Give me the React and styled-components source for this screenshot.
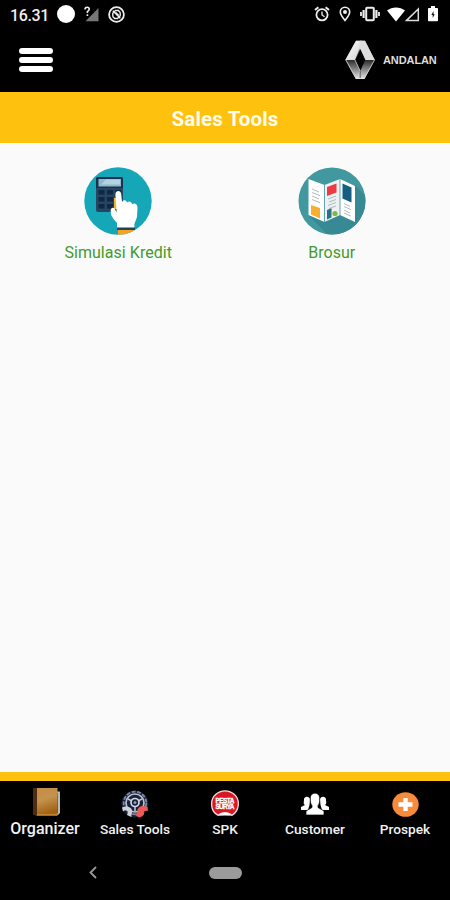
import React from "react"
import styled, { createGlobalStyle } from "styled-components"

const AlarmIcon = () => (
	<svg width="16" height="16" viewBox="0 0 16 16" fill="none" stroke="#eee">
		<circle cx="8" cy="8.8" r="5.6" strokeWidth="1.8" />
		<path d="M1 4 4.4 1.2M15 4 11.6 1.2" strokeWidth="2" />
		<path d="M8 5.5V9l2.6 1.7" strokeWidth="1.3" />
	</svg>
)

const PinIcon = () => (
	<svg width="12" height="16" viewBox="0 0 12 16" fill="none" stroke="#eee">
		<path d="M6 14.4C3.4 11.2 1.3 8.6 1.3 6a4.7 4.7 0 0 1 9.4 0c0 2.6-2.1 5.2-4.7 8.4z" strokeWidth="1.6" />
		<circle cx="6" cy="6" r="2" fill="#eee" stroke="none" />
	</svg>
)

const VibrateIcon = () => (
	<svg width="20" height="16" viewBox="0 0 20 16" fill="none" stroke="#eee">
		<rect x="6.2" y="1.8" width="7.6" height="12.4" rx="1" strokeWidth="2" />
		<path d="M3.6 4v8M16.4 4v8" strokeWidth="2.2" />
		<path d="M1 6v4M19 6v4" strokeWidth="1.8" />
	</svg>
)

const WifiIcon = () => (
	<svg width="18" height="15" viewBox="0 0 18 15">
		<path d="M0 3.4C5.2-.6 12.8-.6 18 3.4L9 14.5z" fill="#fff" />
	</svg>
)

const SignalIcon = () => (
	<svg width="15" height="15" viewBox="0 0 15 15">
		<path d="M1.6 13.4 13.3 2v11.4z" fill="none" stroke="#ddd" strokeWidth="1.5" />
	</svg>
)

const BatteryIcon = () => (
	<svg width="10" height="16" viewBox="0 0 10 16">
		<path d="M3 0h4v2h2.2q.8 0 .8.8v11.7q0 .8-.8.8H.8q-.8 0-.8-.8V2.8Q0 2 .8 2H3z" fill="#fff" />
		<path d="M5.5 5 3.4 9h1.3v3L6.700 8.200H5.500z" fill="#111" />
	</svg>
)

const NoSimIcon = () => (
	<svg width="15" height="16" viewBox="0 0 15 16">
		<path d="M1.5 15.2 14.5 2v13.2z" fill="#777" />
		<path d="M1 3.6Q1 1.3 3.100 1.300T5.200 3.300Q5.200 4.500 3.400 5.700V7M3.400 8.300V10" fill="none" stroke="#eee" strokeWidth="1.6" />
	</svg>
)

const SyncIcon = () => (
	<svg width="17" height="17" viewBox="0 0 17 17" fill="none" stroke="#eee">
		<circle cx="8.5" cy="8.5" r="7.4" strokeWidth="1.8" />
		<path d="M4.8 10.5V7.2L7.500 4.500M12.200 6.500v3.300L9.500 12.500M7 4.500h3.300l2 2M10 12.500H6.700l-2-2" strokeWidth="1.4" />
		<path d="m4.800 4.800 7.500 7.500M7.700 6.500l3 3" strokeWidth="1.5" />
	</svg>
)

const DiamondLogo = () => (
	<svg width="30" height="40" viewBox="0 0 30 40">
		<defs>
			<linearGradient id="steelTop" x1="0" y1="0" x2="1" y2="1">
				<stop offset="0" stopColor="#fff" />
				<stop offset="1" stopColor="#d2d2d2" />
			</linearGradient>
			<linearGradient id="steelBottom" x1="0" y1="0" x2="0" y2="1">
				<stop offset="0" stopColor="#292929" />
				<stop offset="1" stopColor="#e8e8e8" />
			</linearGradient>
		</defs>
		<path d="M11 .8h9l9.800 19.100L19.300 39H11L.3 19.900z" fill="#999" />
		<path d="M11 .8h6L10 19.900H.3z" fill="url(#steelTop)" />
		<path d="M15 .8h5l9.800 19.100H20.200L14 8z" fill="#dedede" />
		<path d="M.3 19.900H10L17 36l-1.500 3H11z" fill="url(#steelBottom)" />
		<path d="M29.800 19.900H20.200L13.500 36l2 3h3.800z" fill="url(#steelBottom)" />
		<path d="m15.300 9 5.100 10.900-5.100 11-5.200-11z" fill="#030303" />
		<path d="m10 20 5.200 11L12 37M29.500 20 19 39M1 20l10.300 19" fill="none" stroke="#ddd" strokeWidth=".7" />
		<path d="M15.200 31v7" stroke="#333" strokeWidth=".7" />
	</svg>
)

const CalculatorIcon = () => (
	<svg width="68" height="68" viewBox="0 0 68 68">
		<defs>
			<clipPath id="calcCircle"><circle cx="34" cy="34" r="33.7" /></clipPath>
		</defs>
		<g clipPath="url(#calcCircle)">
			<rect width="68" height="68" fill="#15a7b7" />
			<rect x="12" y="10" width="27" height="35" rx="2" fill="#254562" />
			<path d="M12 12q0-2 2-2h23q2 0 2 2v9H12z" fill="#17324e" />
			<rect x="14.500" y="12" width="22.500" height="7.500" fill="#8fb8cd" />
			<path d="M17 17.500 22 12.500h14v5z" fill="#b4d2df" />
			<path d="M14.500 23h6v4.500h-6zM23 23h6v4.500h-6zM31.500 23h5.500v4.500h-5.500zM14.500 30h6v4.500h-6zM23 30h6v4.500h-6zM14.500 37h6v4.500h-6zM23 37h6v4.500h-6z" fill="#102841" />
			<path d="M30 31h4v11h-4z" fill="#efb52f" />
			<path d="M33 61v-5c-2.500-3-6-6-6.300-11-.3-4 2-5.500 4.200-3l1.800 3.500L31.400 28c-.3-5 5.400-5.500 5.800-.8l.9 8c1-3 4.400-2.400 5.200.4 1.500-2 4.200-1 4.800 1.700 2-1.700 5.400-.5 5.400 3.400L53 50l-2.600 7v5z" fill="#fff" />
			<path d="M33 60.500h18v2.500H33z" fill="#24405a" />
			<path d="M34 63h17v5H34z" fill="#f5a325" />
		</g>
	</svg>
)

const BrochureIcon = () => (
	<svg width="68" height="68" viewBox="0 0 68 68">
		<defs>
			<clipPath id="brochureCircle"><circle cx="34" cy="34" r="33.5" /></clipPath>
		</defs>
		<g clipPath="url(#brochureCircle)">
			<rect width="68" height="68" fill="#41989f" />
			<path d="m57 18 16 17v37H34L11 49z" fill="#378a93" />
			<path d="m10.500 12 16 6v37l-16-7z" fill="#fff" />
			<path d="m26.500 18 15.500-6v36l-15.500 7z" fill="#edf1f3" />
			<path d="m42 12 15 7v36l-15-7z" fill="#fff" />
			<path d="M26.500 18v37M42 12v36" stroke="#61a7b0" />
			<path d="m13 38 9 3v10.500l-9-4z" fill="#f8ae2f" />
			<path d="m29 20 9.500-3.500v9L29 29z" fill="#ee3b43" />
			<path d="m44.500 16.500 9 4v15l-9-4z" fill="#155e80" />
			<path d="m29 43 4.500-2v9.500l-4.500 2z" fill="#267486" />
			<circle cx="37" cy="46.500" r="2.600" fill="#80b93e" />
			<path d="m14 22 7 3m-7 .5 8 3.200M14 29l7 3m-7 .5 8 3.200M30 32l8-3m-7 6 7-2.500M30 38.500l8-3m-7 6 7-2.500M46 36.500l6 3m-6 0 7 3.200M46 43l6 3m-6 0 7 3.200" fill="none" stroke="#9aabb3" strokeWidth=".8" />
		</g>
	</svg>
)

const BookIcon = () => (
	<svg width="28" height="28" viewBox="0 0 28 28">
		<defs>
			<linearGradient id="bookCover" x2=".3" y2="1">
				<stop stopColor="#c58c43" />
				<stop offset=".5" stopColor="#c3934d" />
				<stop offset="1" stopColor="#a26217" />
			</linearGradient>
		</defs>
		<path d="M24 3.500h3V25l-2 2h-2z" fill="#bbb9b3" />
		<path d="M24.500 5v20" stroke="#555" />
		<path d="M0 0h24.500v27.500H3L0 26z" fill="url(#bookCover)" />
		<path d="M0 0h4v27.500H3L0 26z" fill="#4e2d13" />
		<path d="M4 27h20.500" stroke="#dfa44b" />
	</svg>
)

const ToolsIcon = () => (
	<svg width="28" height="28" viewBox="0 0 28 28" fill="none">
		<circle cx="14" cy="14" r="13.5" fill="#182139" />
		<circle cx="14" cy="13" r="11.300" stroke="#7f89a2" strokeWidth="1.800" strokeDasharray="4 1.500" />
		<circle cx="14" cy="13" r="9" stroke="#b9c0d0" strokeWidth="1.700" />
		<path d="M7 9l4 2M21 9l-4 2M14 17v4" stroke="#b9c0d0" strokeWidth="1.600" />
		<circle cx="14" cy="12.500" r="4" stroke="#d3d8e2" strokeWidth="1.700" />
		<circle cx="14" cy="12.500" r="1.500" fill="#8e9bb0" />
		<path d="M1 17.500c4-2 9-1 10 2.500.7 3-1 4.500-.5 7L6 25l1.200-3.500-3-1.500-2.200 1.500z" fill="#cdd1d8" />
		<path d="M26.500 17c-4.500-2.500-10-.5-10 3.500 0 2-2 3-1.500 5l3 2c3-.5 5.500-2.500 5-4.500-.5-1.500 1-2.500 4-2z" fill="#ed5b58" />
	</svg>
)

const SpkText = styled.text`
	font-family: "Liberation Sans", sans-serif;
	font-size: 6.5px;
	font-weight: 700;
	fill: #fff;
	stroke: #fff;
	stroke-width: 0.3px;
`

const SpkIcon = () => (
	<svg width="28" height="28" viewBox="0 0 28 28">
		<path d="M7 26C1 23 0 18 0 13.5a14 13.300 0 0 1 28 0C28 18 26 24 21 26c-4-1.500-9-1.500-14 0z" fill="#f5dada" />
		<path d="M7 24.500C2.500 21.500 1.300 18 1.300 13.500a12.700 12 0 0 1 25.400 0c0 4.500-1.700 8-5.700 11-4-3-10-3-14 0z" fill="#dc1725" />
		<path d="M8 24.500c3-3 9-3 12 0l-1.500 1h-9z" fill="#fff" />
		<SpkText x="4.5" y="12.500" textLength="19">PESTA</SpkText>
		<SpkText x="4.5" y="18.500" textLength="19">SURYA</SpkText>
		<path d="M5 13.200h18" stroke="#fff" strokeWidth=".6" />
	</svg>
)

const CustomersIcon = () => (
	<svg width="28" height="22" viewBox="0 0 28 22" fill="#fff">
		<path d="M0 17v-3l4-2c-2-1-1-3-1-5.500C3 2.500 9 3 9 6.500L8.500 12 7 17zM28 17v-3l-4-2c2-1 1-3 1-5.500 0-4-6-3.500-6 0l.5 5.500 1.500 5z" />
		<path d="M5 22v-4l6-3.500v-2C9.500 11 9.300 8.500 9.300 5c0-6.500 9.400-6.500 9.400 0 0 3.500-.2 6-1.700 7.500v2l6 3.500v4z" stroke="#000" strokeWidth=".7" />
	</svg>
)

const AddIcon = () => (
	<svg width="27" height="25" viewBox="0 0 27 25">
		<ellipse cx="13.5" cy="12.5" rx="13.2" ry="12.3" fill="#f68b3c" />
		<path d="M13.5 6v13M6.500 12.500h14" stroke="#fff" strokeWidth="4.4" />
	</svg>
)

const tabs = [
	{ label: "Organizer", icon: <BookIcon />, large: true },
	{ label: "Sales Tools", icon: <ToolsIcon /> },
	{ label: "SPK", icon: <SpkIcon /> },
	{ label: "Customer", icon: <CustomersIcon /> },
	{ label: "Prospek", icon: <AddIcon /> },
]

const App = () => {
	return (
		<Screen>
			<GlobalStyle />
			<StatusBar>
				<StatusGroup>
					<Clock>16.31</Clock>
					<Dot />
					<NoSimIcon />
					<SyncIcon />
				</StatusGroup>
				<StatusIcons>
					<AlarmIcon />
					<PinIcon />
					<VibrateIcon />
					<Network>
						<WifiIcon />
						<SignalIcon />
					</Network>
					<BatteryIcon />
				</StatusIcons>
			</StatusBar>
			<Header>
				<MenuButton aria-label="Menu">
					<MenuLine />
					<MenuLine />
					<MenuLine />
				</MenuButton>
				<Brand>
					<DiamondLogo />
					<BrandName>ANDALAN</BrandName>
				</Brand>
			</Header>
			<TitleBar>Sales Tools</TitleBar>
			<ToolGrid>
				<Tool>
					<CalculatorIcon />
					<ToolName $spacing="0.05px">Simulasi Kredit</ToolName>
				</Tool>
				<Tool>
					<BrochureIcon />
					<ToolName>Brosur</ToolName>
				</Tool>
			</ToolGrid>
			<TabBar>
				{tabs.map((tab) => (
					<Tab key={tab.label}>
						<TabIcon $large={tab.large}>{tab.icon}</TabIcon>
						<TabLabel $large={tab.large}>{tab.label}</TabLabel>
					</Tab>
				))}
			</TabBar>
			<SystemNav>
				<BackButton aria-label="Back">
					<svg width="8" height="13" viewBox="0 0 8 13">
						<path d="M7 1 1.500 6.500 7 12" fill="none" stroke="#999" strokeWidth="1.800" />
					</svg>
				</BackButton>
				<HomePill />
			</SystemNav>
		</Screen>
	)
}

const GlobalStyle = createGlobalStyle`
	* {
		box-sizing: border-box;
	}
	body {
		margin: 0;
		background: #fafafa;
		font-family: Roboto, sans-serif;
	}
	svg {
		display: block;
		flex-shrink: 0;
	}
	button {
		border: 0;
		padding: 0;
		background: none;
	}
`

const Screen = styled.div`
	width: 450px;
	height: 900px;
	display: flex;
	flex-direction: column;
	overflow: hidden;
	background: #fafafa;
`

const StatusBar = styled.div`
	height: 28px;
	flex-shrink: 0;
	display: flex;
	justify-content: space-between;
	align-items: center;
	padding: 0 12px 0 10px;
	background: #000;
`

const StatusGroup = styled.div`
	display: flex;
	align-items: center;
	gap: 9px;
`

const StatusIcons = styled(StatusGroup)``

const Clock = styled.span`
	width: 38px;
	font-size: 16px;
	line-height: 18px;
	padding-top: 3px;
	letter-spacing: -0.4px;
	font-weight: 500;
	color: #eee;
`

const Dot = styled.span`
	width: 18px;
	height: 18px;
	border-radius: 50%;
	background: #fff;
`

const Network = styled.div`
	display: flex;
	margin-left: -2px;
	margin-right: -1px;
`

const Header = styled.header`
	height: 64px;
	flex-shrink: 0;
	display: flex;
	align-items: center;
	justify-content: space-between;
	padding: 0 13px 0 19px;
	background: #000;
`

const MenuButton = styled.button`
	width: 34px;
	display: flex;
	flex-direction: column;
	gap: 3.5px;
`

const MenuLine = styled.span`
	height: 5.5px;
	width: 100%;
	border-radius: 3px;
	background: #fff;
`

const Brand = styled.div`
	display: flex;
	align-items: center;
	gap: 8px;
`

const BrandName = styled.span`
	width: 54px;
	font-family: "Liberation Sans", sans-serif;
	font-size: 11px;
	font-weight: 700;
	letter-spacing: -0.1px;
	color: #ddd;
`

const TitleBar = styled.h1`
	height: 51px;
	flex-shrink: 0;
	margin: 0;
	padding-top: 2px;
	display: flex;
	align-items: center;
	justify-content: center;
	font-size: 20.5px;
	font-weight: 700;
	letter-spacing: 0.15px;
	color: #fffbed;
	background: #fec10d;
`

const ToolGrid = styled.main`
	flex: 1;
	display: grid;
	grid-template-columns: 1fr 1fr;
	align-content: start;
	padding: 24px 11.5px 0;
`

const Tool = styled.div`
	display: flex;
	flex-direction: column;
	align-items: center;
`

const ToolName = styled.span`
	margin-top: 8px;
	font-size: 16px;
	line-height: 19px;
	letter-spacing: ${({ $spacing }) => $spacing || "0"};
	color: #429a2c;
`

const TabBar = styled.nav`
	height: 73px;
	flex-shrink: 0;
	display: grid;
	grid-template-columns: repeat(5, 1fr);
	border-top: 9.5px solid #fec10d;
	background: #000;
`

const Tab = styled.div`
	display: flex;
	flex-direction: column;
	align-items: center;
`

const TabIcon = styled.div`
	height: 39px;
	display: flex;
	align-items: center;
	padding-top: ${({ $large }) => ($large ? "3px" : "7px")};
	padding-left: ${({ $large }) => ($large ? "3px" : "0")};
`

const TabLabel = styled.span`
	font-size: ${({ $large }) => ($large ? "16px" : "13.7px")};
	font-weight: 500;
	line-height: 18px;
	white-space: nowrap;
	color: #f2f2f2;
`

const SystemNav = styled.div`
	height: 55px;
	flex-shrink: 0;
	display: grid;
	grid-template-columns: 186px 1fr 186px;
	align-items: center;
	justify-items: center;
	background: #000;
`

const BackButton = styled.button`
	display: flex;
`

const HomePill = styled.span`
	width: 33px;
	height: 12px;
	border-radius: 6px;
	background: #9b9b9b;
`

export default App
